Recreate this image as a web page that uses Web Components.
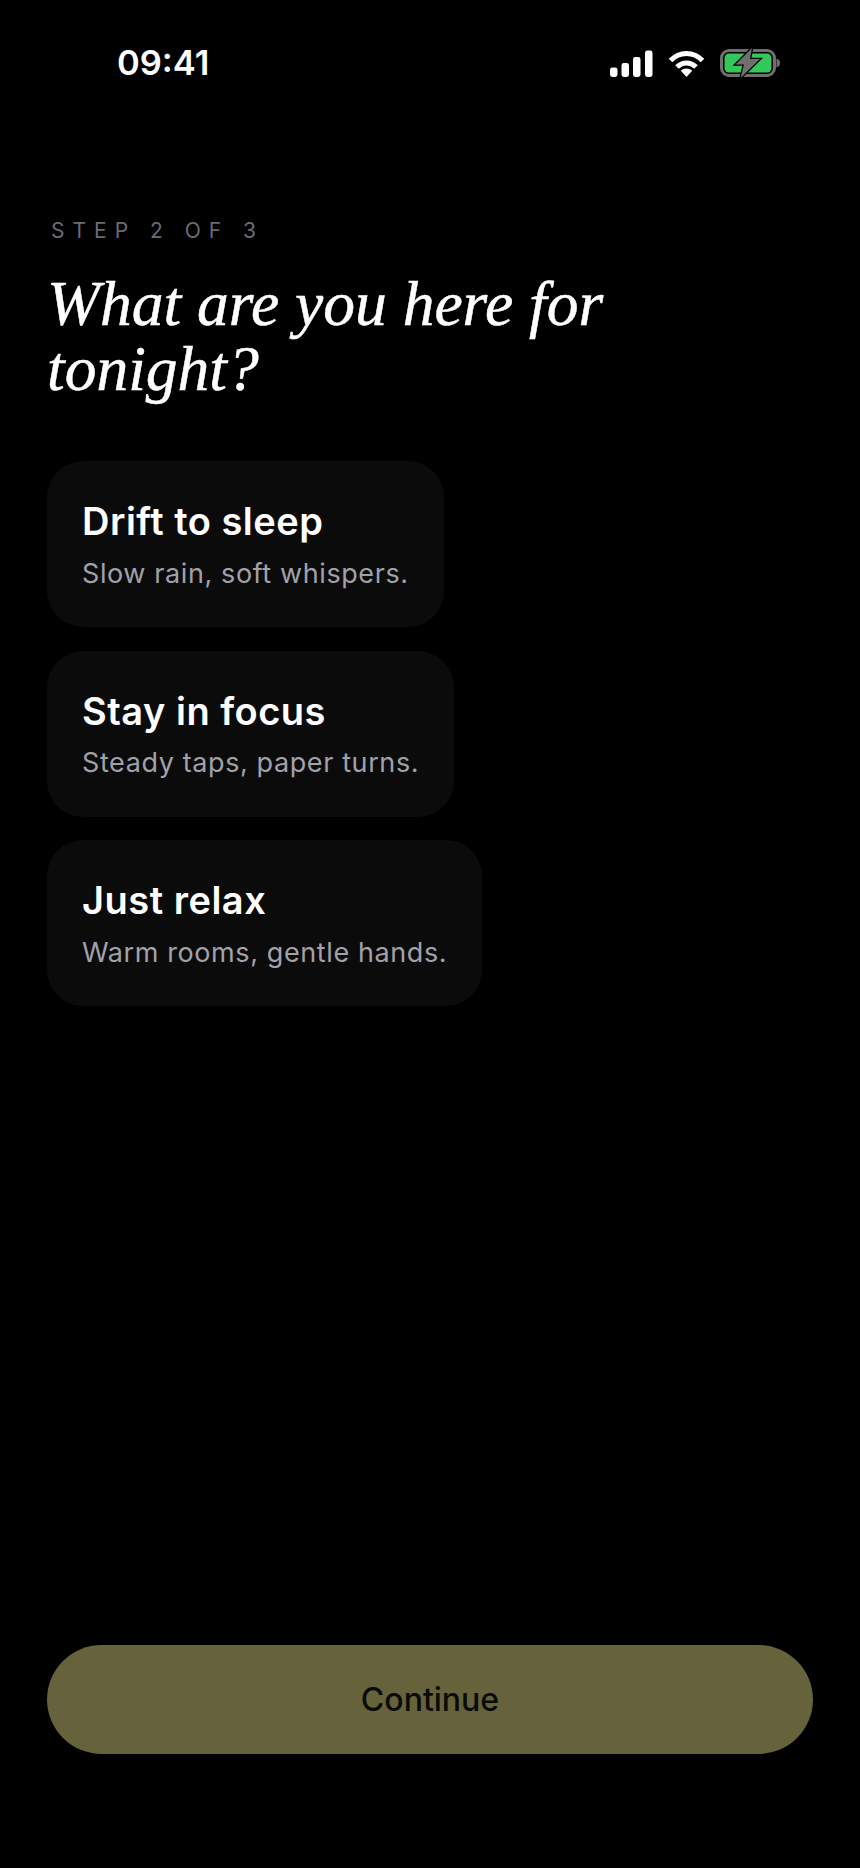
<!DOCTYPE html>
<html>
<head>
<meta charset="utf-8">
<title>Step 2 of 3</title>
<style>
  html, body { margin: 0; background: #000; }
</style>
</head>
<body>
<onboarding-screen>
  <status-bar slot="status" time="09:41"></status-bar>
  <step-heading slot="heading" step="STEP 2 OF 3">What are you here for tonight?</step-heading>
  <choice-card title="Drift to sleep">Slow rain, soft whispers.</choice-card>
  <choice-card title="Stay in focus">Steady taps, paper turns.</choice-card>
  <choice-card title="Just relax">Warm rooms, gentle hands.</choice-card>
  <pill-button slot="action">Continue</pill-button>
</onboarding-screen>

<script>
//page frame
class OnboardingScreen extends HTMLElement {
  constructor() {
    super();
    this.attachShadow({ mode: "open" });
    this.shadowRoot.innerHTML = `<style>
      :host { display: flex; flex-direction: column; box-sizing: border-box; width: 860px; height: 1868px; background: #000; padding: 0 47px 114px; font-family: Inter, "Liberation Sans", sans-serif; }
      .cards { display: flex; flex-direction: column; align-items: flex-start; gap: 23.5px; margin-top: 60.5px; }
      .action { margin-top: auto; }
    </style>
    <slot name="status"></slot>
    <slot name="heading"></slot>
    <div class="cards"><slot></slot></div>
    <div class="action"><slot name="action"></slot></div>`;
  }
}
customElements.define("onboarding-screen", OnboardingScreen);

//status bar
class StatusBar extends HTMLElement {
  constructor() {
    super();
    this.attachShadow({ mode: "open" });
    this.shadowRoot.innerHTML = `<style>
      :host { display: flex; align-items: center; justify-content: space-between; height: 126px; margin: 0 33px 0 70px; color: #fff; }
      .time { font-size: 34.5px; font-weight: 600; line-height: 1; }
      .icons { display: flex; align-items: center; gap: 15px; }
      svg { display: block; overflow: visible; }
    </style>
    <span class="time">${this.getAttribute("time")}</span>
    <div class="icons">
      <svg width="43" height="27" viewBox="0 0 43 27" fill="#fff">
        <rect x="0" y="17.500" width="7.500" height="9.500" rx="2.400"/>
        <rect x="11.500" y="13" width="7.500" height="14" rx="2.400"/>
        <rect x="23" y="7" width="7.500" height="20" rx="2.400"/>
        <rect x="35" y="0.500" width="7.500" height="26.500" rx="2.400"/>
      </svg>
      <svg width="37" height="27" viewBox="0 0 37 27" fill="none" stroke="#fff" stroke-width="5">
        <path d="M2.500 10.500C11.500 1 25.500 1 34.500 10.500"/>
        <path d="M9 17C14.500 11.500 22.500 11.500 28 17"/>
        <path d="M18.500 27L12.800 20.800C16 17.800 21 17.800 24.200 20.800Z" fill="#fff" stroke="none"/>
      </svg>
      <svg width="60" height="28" viewBox="0 0 60 28">
        <rect x="1.500" y="1.500" width="53" height="25" rx="7.500" fill="none" stroke="#6f6f70" stroke-width="3"/>
        <rect x="4.500" y="4.500" width="47" height="19" rx="4.500" fill="#34c759"/>
        <path d="M56.500 9.500C59 10.200 60 12 60 14C60 16 59 17.800 56.500 18.500Z" fill="#6f6f70"/>
        <path d="M32 -1L15.500 15.500H24L20.500 29L40 10H30Z" fill="#6f6f70" stroke="#000" stroke-width="2.500" paint-order="stroke"/>
      </svg>
    </div>`;
  }
}
customElements.define("status-bar", StatusBar);

//step label and title
class StepHeading extends HTMLElement {
  constructor() {
    super();
    this.attachShadow({ mode: "open" });
    this.shadowRoot.innerHTML = `<style>
      :host { display: block; padding-top: 93px; }
      .step { font-size: 21px; line-height: 24px; letter-spacing: 8px; color: #6b6b76; margin: 0 0 27.5px 4px; }
      h1 { margin: 0; font: italic 400 63.5px/65px "Liberation Serif", serif; -webkit-text-stroke: 0.5px #fff; color: #fff; width: 640px; }
    </style>
    <div class="step">${this.getAttribute("step")}</div>
    <h1><slot></slot></h1>`;
  }
}
customElements.define("step-heading", StepHeading);

//one option
class ChoiceCard extends HTMLElement {
  constructor() {
    super();
    this.attachShadow({ mode: "open" });
    this.shadowRoot.innerHTML = `<style>
      :host { display: block; box-sizing: border-box; height: 166px; padding: 38px 35px 0; background: #0b0b0c; border-radius: 36px; }
      .title { font-size: 38px; line-height: 44px; letter-spacing: 0.5px; font-weight: 600; color: #fff; }
      .sub { font-size: 27px; line-height: 38px; letter-spacing: 0.6px; color: #a1a1aa; margin-top: 11.5px; }
    </style>
    <div class="title">${this.getAttribute("title")}</div>
    <div class="sub"><slot></slot></div>`;
  }
}
customElements.define("choice-card", ChoiceCard);

//bottom button
class PillButton extends HTMLElement {
  constructor() {
    super();
    this.attachShadow({ mode: "open" });
    this.shadowRoot.innerHTML = `<style>
      :host { display: flex; align-items: center; justify-content: center; height: 109px; border-radius: 55px; background: #65623c; color: #0a0a06; font-size: 32px; font-weight: 500; }
    </style>
    <slot></slot>`;
  }
}
customElements.define("pill-button", PillButton);
</script>
</body>
</html>
